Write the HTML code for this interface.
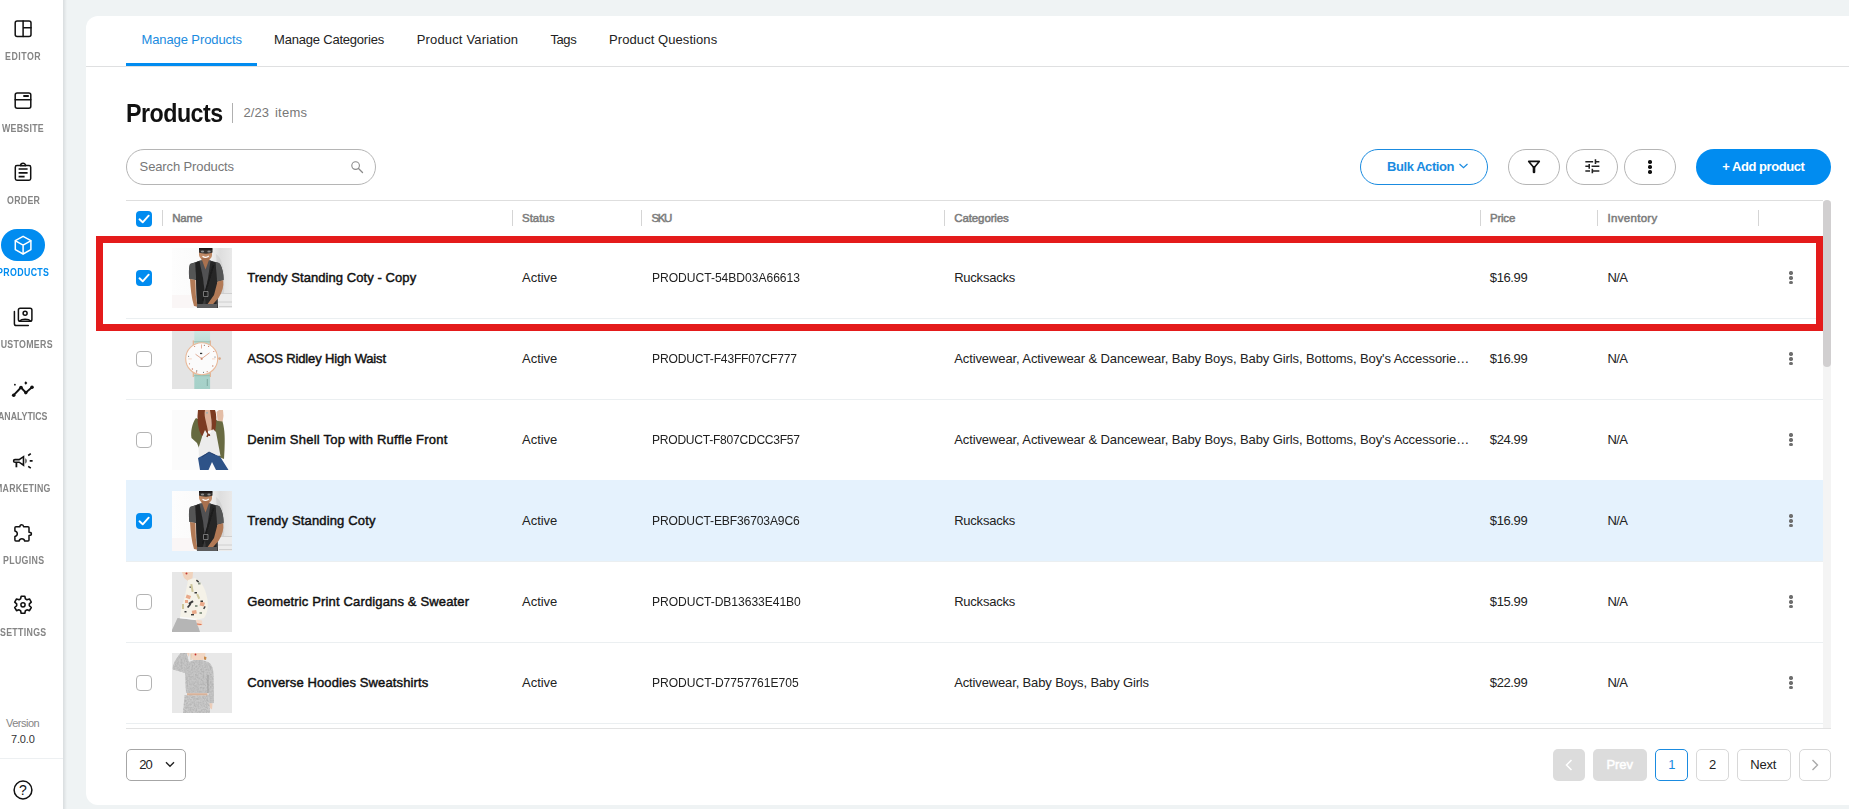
<!DOCTYPE html>
<html lang="en"><head><meta charset="utf-8"><title>Products</title>
<style>
*{box-sizing:border-box;margin:0;padding:0}
html,body{width:1849px;height:809px;overflow:hidden;background:#eff3f4;font-family:"Liberation Sans",sans-serif}
.t{position:absolute;white-space:pre;line-height:20px;height:20px}
.abs{position:absolute}
#side{position:absolute;left:0;top:0;width:63px;height:809px;background:#fff}
#sideshadow{position:absolute;left:63px;top:0;width:4px;height:809px;background:linear-gradient(90deg,#d9dddf,#eff3f4)}
#card{position:absolute;left:86px;top:16px;width:1780px;height:789px;background:#fff;border-radius:12px 0 0 12px}
.hl{position:absolute;height:1px;background:#e6e6e6}
.vsep{position:absolute;width:1px;height:16px;top:210px;background:#d5d5d5}
.cb{position:absolute;width:16px;height:16px;border-radius:4px;left:136px}
/*cboff*/.cb.off{border:1px solid #b3b3b3;background:#fff}
.cb.on{background:#018cf0}
.thumb{position:absolute;left:172px;width:60px;height:60px;overflow:hidden}
.btn{position:absolute;top:149px;height:36px;border-radius:18px}
.pg{position:absolute;top:749px;height:32px;border-radius:5px}
svg{position:absolute;overflow:visible}
#root{position:absolute;left:0;top:0;width:1849px;height:809px;overflow:hidden}

</style></head>
<body>
<div id="root">
<div id="side"></div><div id="sideshadow"></div>
<span class="t" style="left:5.15px;top:46.9px;font-size:10px;font-weight:700;color:#858585;letter-spacing:0.59px;transform:scaleX(0.88);transform-origin:0 50%;">EDITOR</span>
<span class="t" style="left:2.15px;top:118.9px;font-size:10px;font-weight:700;color:#858585;letter-spacing:0.3px;transform:scaleX(0.88);transform-origin:0 50%;">WEBSITE</span>
<span class="t" style="left:6.5px;top:190.9px;font-size:10px;font-weight:700;color:#858585;letter-spacing:0.34px;transform:scaleX(0.88);transform-origin:0 50%;">ORDER</span>
<span class="t" style="left:-3px;top:262.9px;font-size:10px;font-weight:700;color:#018cf0;letter-spacing:0.42px;transform:scaleX(0.88);transform-origin:0 50%;">PRODUCTS</span>
<span class="t" style="left:-6.3px;top:334.9px;font-size:10px;font-weight:700;color:#858585;letter-spacing:0.36px;transform:scaleX(0.88);transform-origin:0 50%;">CUSTOMERS</span>
<span class="t" style="left:-1.7px;top:406.9px;font-size:10px;font-weight:700;color:#858585;letter-spacing:-0.02px;transform:scaleX(0.88);transform-origin:0 50%;">ANALYTICS</span>
<span class="t" style="left:-4.7px;top:478.9px;font-size:10px;font-weight:700;color:#858585;letter-spacing:0.3px;transform:scaleX(0.88);transform-origin:0 50%;">MARKETING</span>
<span class="t" style="left:2.5px;top:550.9px;font-size:10px;font-weight:700;color:#858585;letter-spacing:0.36px;transform:scaleX(0.88);transform-origin:0 50%;">PLUGINS</span>
<span class="t" style="left:-0.1px;top:622.9px;font-size:10px;font-weight:700;color:#858585;letter-spacing:0.35px;transform:scaleX(0.88);transform-origin:0 50%;">SETTINGS</span>
<div class="abs" style="left:1px;top:229px;width:44px;height:32px;border-radius:16px;background:#018cf0"></div>
<svg style="left:0;top:0" width="63" height="809" viewBox="0 0 63 809"><g stroke="#111" stroke-width="1.5" fill="none" stroke-linecap="round" stroke-linejoin="round"><rect x="15.2" y="21.1" width="15.8" height="15.4" rx="2"/><path d="M23.1 21.1V36.5M23.1 27.8H31"/></g>
<g stroke="#111" stroke-width="1.5" fill="none" stroke-linecap="round" stroke-linejoin="round"><rect x="15.2" y="93.1" width="15.6" height="15.1" rx="2"/><path d="M15.2 99.8H30.8"/><path d="M23.300 96H28.800" stroke-width="2" stroke-linecap="butt"/></g>
<g stroke="#111" stroke-width="1.5" fill="none" stroke-linecap="round" stroke-linejoin="round" transform="translate(0 0.6)"><path d="M20.600 165H16.900a1.600 1.600 0 0 0-1.600 1.600V178a1.600 1.600 0 0 0 1.600 1.600H29.100a1.600 1.600 0 0 0 1.600-1.600V166.600a1.600 1.600 0 0 0-1.600-1.600H25.600"/><path d="M20.600 165.200a2.500 2.500 0 0 1 5 0Z"/><path d="M18.600 168.400H27.600M18.600 172.200H27.600M18.600 176.100H24.600" stroke-linecap="butt" stroke-width="1.700"/></g>
<g stroke="#fff" stroke-width="1.5" fill="none" stroke-linecap="round" stroke-linejoin="round"><path d="M23.1 236.3L30.9 240.7V249.6L23.1 254L15.3 249.6V240.7Z"/><path d="M15.5 240.8L23.1 245.1L30.7 240.8M23.1 245.1V253.8"/></g>
<g stroke="#111" stroke-width="1.5" fill="none" stroke-linecap="round" stroke-linejoin="round"><rect x="18.4" y="308.2" width="13.5" height="13" rx="1.8"/><circle cx="25.1" cy="313.3" r="2"/><path d="M20 320.9C21.5 318.6 28.7 318.6 30.3 320.9"/><path d="M14.4 311.5V323.8a1.8 1.8 0 0 0 1.8 1.8H28.3"/></g>
<g stroke="#111" stroke-width="1.5" fill="none" stroke-linecap="round" stroke-linejoin="round"><path d="M13.7 395.2L21 387.5L25.8 392.6L32 387.2" stroke-width="1.900"/></g><g fill="#111"><circle cx="13.700" cy="395.200" r="1.800"/><circle cx="21" cy="387.500" r="1.800"/><circle cx="25.800" cy="392.600" r="1.800"/><circle cx="32" cy="387.200" r="1.800"/><circle cx="14.9" cy="384.7" r="0.9"/><path d="M25.8 381.3L27.3 383L25.8 384.7L24.3 383Z"/></g>
<g stroke="#111" stroke-width="1.5" fill="none" stroke-linecap="round" stroke-linejoin="round"><path d="M14.900 459.600H19.100L23.500 456.700V465.200L19.100 462.200H14.900a1.300 1.300 0 0 1 0-2.600Z" stroke-width="1.600" stroke-linejoin="miter"/><path d="M16.400 462.400V467.300" stroke-width="1.800" stroke-linecap="butt"/><path d="M28.200 455.500L30.800 453.700M29.700 460.900H32.600M28.200 466.400L30.800 468.200" stroke-width="1.600" stroke-linecap="butt"/></g><path d="M25.100 458.200C27.500 459 27.500 462.700 25.100 463.500Z" fill="#666"/>
<g stroke="#111" stroke-width="1.5" fill="none" stroke-linecap="round" stroke-linejoin="round"><path d="M15.900 526.700H19.900C19.900 525.300 20.600 524.800 21.700 524.800C22.800 524.800 23.500 525.300 23.600 526.700H28a1 1 0 0 1 1 1V532.300C30.500 532.300 31.400 532.800 31.400 533.900C31.400 535 30.500 535.400 29 535.400V540a1 1 0 0 1-1 1H24.700C24.400 539.600 23.300 538.800 21.900 538.800C20.500 538.800 19.400 539.600 19.100 541H15.900a1 1 0 0 1-1-1V536.500C16.300 536.200 17.300 535.200 17.300 533.800C17.300 532.400 16.300 531.300 14.900 531V527.700a1 1 0 0 1 1-1Z"/></g>
<g stroke="#111" stroke-width="1.5" fill="none" stroke-linecap="round" stroke-linejoin="round"><path d="M20.60 598.87L21.19 596.29L24.81 596.29L25.40 598.87L26.94 599.75L29.46 598.97L31.28 602.12L29.34 603.92L29.34 605.68L31.28 607.48L29.46 610.63L26.94 609.85L25.40 610.73L24.81 613.31L21.19 613.31L20.60 610.73L19.06 609.85L16.54 610.63L14.72 607.48L16.66 605.68L16.66 603.92L14.72 602.12L16.54 598.97L19.06 599.75Z" stroke-width="1.6"/><circle cx="23" cy="604.8" r="2.1" stroke-width="1.500"/></g>
<g stroke="#111" stroke-width="1.5" fill="none" stroke-linecap="round" stroke-linejoin="round"><circle cx="23" cy="790" r="8.9"/></g></svg>
<span class="t" style="left:19.1px;top:780.2px;font-size:14px;font-weight:400;color:#111;/*HELPQ*/">?</span>
<span class="t" style="left:5.9px;top:713.3px;font-size:11px;font-weight:400;color:#858585;letter-spacing:-0.48px;">Version</span>
<span class="t" style="left:11.05px;top:729px;font-size:11px;font-weight:400;color:#333;letter-spacing:-0.19px;">7.0.0</span>
<div class="hl" style="left:0;top:758px;width:63px;background:#edf0f2"></div>
<div id="card"></div>
<span class="t" style="left:141.4px;top:29.7px;font-size:13px;font-weight:400;color:#1a8be0;letter-spacing:-0.09px;">Manage Products</span>
<span class="t" style="left:274.1px;top:29.7px;font-size:13px;font-weight:400;color:#222;letter-spacing:-0.21px;">Manage Categories</span>
<span class="t" style="left:416.7px;top:29.7px;font-size:13px;font-weight:400;color:#222;letter-spacing:0.16px;">Product Variation</span>
<span class="t" style="left:550.4px;top:29.7px;font-size:13px;font-weight:400;color:#222;letter-spacing:-0.39px;">Tags</span>
<span class="t" style="left:609.1px;top:29.7px;font-size:13px;font-weight:400;color:#222;letter-spacing:0.07px;">Product Questions</span>
<div class="hl" style="left:86px;top:66px;width:1763px;background:#dfe0e1"></div>
<div class="abs" style="left:126px;top:63px;width:131px;height:3px;background:#018cf0"></div>
<span class="t" style="left:125.6px;top:103px;font-size:25px;font-weight:700;color:#111;letter-spacing:-0.55px;transform:scaleX(0.93);transform-origin:0 50%;line-height:30px;height:30px;margin-top:-5px;">Products</span>
<div class="abs" style="left:232px;top:103px;width:1px;height:20px;background:#b0b0b0"></div>
<span class="t" style="left:243.5px;top:102.8px;font-size:13px;font-weight:400;color:#777;letter-spacing:0.06px;">2/23</span>
<span class="t" style="left:275px;top:102.8px;font-size:13px;font-weight:400;color:#777;letter-spacing:0.23px;">items</span>
<div class="abs" style="left:126px;top:149px;width:250px;height:36px;border:1px solid #b5b5b5;border-radius:18px;background:#fff"></div>
<span class="t" style="left:139.6px;top:156.8px;font-size:13px;font-weight:400;color:#777;letter-spacing:-0.12px;">Search Products</span>
<svg style="left:350px;top:160px" width="14" height="14" viewBox="0 0 14 14"><circle cx="5.600" cy="5.600" r="3.800" fill="none" stroke="#8a8a8a" stroke-width="1.100"/><path d="M8.500 8.500L12.500 12.500" stroke="#8a8a8a" stroke-width="1.300" stroke-linecap="round"/></svg>
<div class="btn" style="left:1360px;width:128px;border:1px solid #1a8be0;background:#fff"></div>
<span class="t" style="left:1387px;top:157px;font-size:13px;font-weight:700;color:#1a8be0;letter-spacing:-0.43px;">Bulk Action</span>
<svg style="left:1459px;top:163px" width="9" height="6" viewBox="0 0 9 6"><path d="M0.500 1L4.500 4.700L8.500 1" fill="none" stroke="#1a8be0" stroke-width="1.200"/></svg>
<div class="btn" style="left:1508px;width:52px;border:1px solid #b5b5b5;background:#fff"></div>
<div class="btn" style="left:1566px;width:52px;border:1px solid #b5b5b5;background:#fff"></div>
<div class="btn" style="left:1624px;width:52px;border:1px solid #b5b5b5;background:#fff"></div>
<svg style="left:0;top:0" width="1849" height="200" viewBox="0 0 1849 200"><path d="M1528.700 161.400H1539.300L1534 167.800Z" fill="none" stroke="#111" stroke-width="1.600" stroke-linejoin="round"/><path d="M1534 167.400V172" stroke="#111" stroke-width="2.600" stroke-linecap="round"/></svg>
<svg style="left:1582.650px;top:157.200px" width="18.700" height="18.700" viewBox="0 0 24 24"><path fill="#222" d="M3 17v2h6v-2H3zM3 5v2h10V5H3zm10 16v-2h8v-2h-8v-2h-2v6h2zM7 9v2H3v2h4v2h2V9H7zm14 4v-2H11v2h10zm-6-4h2V7h4V5h-4V3h-2v6z"/></svg>
<div class="abs" style="left:1648.25px;top:160.35px;width:3.5px;height:3.5px;border-radius:50%;background:#111"></div>
<div class="abs" style="left:1648.25px;top:165.4px;width:3.5px;height:3.5px;border-radius:50%;background:#111"></div>
<div class="abs" style="left:1648.25px;top:170.45px;width:3.5px;height:3.5px;border-radius:50%;background:#111"></div>
<div class="btn" style="left:1696px;width:135px;background:#018cf0"></div>
<span class="t" style="left:1722.2px;top:157px;font-size:13px;font-weight:700;color:#fff;letter-spacing:-0.45px;">+ Add product</span>
<div class="hl" style="left:126px;top:200px;width:1697px;background:#dedede"></div>
<div class="abs" style="left:1823px;top:201px;width:8px;height:527px;background:#f4f4f4"></div>
<div class="abs" style="left:1823px;top:200px;width:8px;height:167px;background:#d1cfd0;border-radius:4px 4px 4px 4px"></div>
<div class="vsep" style="left:162px"></div>
<div class="vsep" style="left:512px"></div>
<div class="vsep" style="left:641px"></div>
<div class="vsep" style="left:944px"></div>
<div class="vsep" style="left:1480px"></div>
<div class="vsep" style="left:1597px"></div>
<div class="vsep" style="left:1758px"></div>
<span class="t" style="left:172.3px;top:208px;font-size:11.5px;font-weight:400;color:#7c7c7c;letter-spacing:-0.23px;-webkit-text-stroke:0.5px #7c7c7c;">Name</span>
<span class="t" style="left:522.1px;top:208px;font-size:11.5px;font-weight:400;color:#7c7c7c;letter-spacing:-0.06px;-webkit-text-stroke:0.5px #7c7c7c;">Status</span>
<span class="t" style="left:651.6px;top:208px;font-size:11.5px;font-weight:400;color:#7c7c7c;letter-spacing:-1.43px;-webkit-text-stroke:0.5px #7c7c7c;">SKU</span>
<span class="t" style="left:954.3px;top:208px;font-size:11.5px;font-weight:400;color:#7c7c7c;letter-spacing:-0.12px;-webkit-text-stroke:0.5px #7c7c7c;">Categories</span>
<span class="t" style="left:1490px;top:208px;font-size:11.5px;font-weight:400;color:#7c7c7c;letter-spacing:-0.23px;-webkit-text-stroke:0.5px #7c7c7c;">Price</span>
<span class="t" style="left:1607.6px;top:208px;font-size:11.5px;font-weight:400;color:#7c7c7c;letter-spacing:0.29px;-webkit-text-stroke:0.5px #7c7c7c;">Inventory</span>
<div class="cb on" style="top:211px"><svg style="left:0;top:0" width="16" height="16" viewBox="0 0 16 16"><path d="M3.500 8.300L6.700 11.300L12.700 4.700" fill="none" stroke="#fff" stroke-width="1.900" stroke-linecap="round" stroke-linejoin="round"/></svg></div>
<div class="hl" style="left:126px;top:318px;width:1697px;background:#ebeff1"></div>
<div class="cb on" style="top:270px"><svg style="left:0;top:0" width="16" height="16" viewBox="0 0 16 16"><path d="M3.500 8.300L6.700 11.300L12.700 4.700" fill="none" stroke="#fff" stroke-width="1.900" stroke-linecap="round" stroke-linejoin="round"/></svg></div>
<div class="thumb" style="top:248px"><svg width="60" height="60" viewBox="0 0 60 60" style="left:0;top:0">
<defs>
<linearGradient id="mbg" x1="0" x2="1" y1="0" y2="0"><stop offset="0" stop-color="#fdfdfd"/><stop offset="0.55" stop-color="#fafafa"/><stop offset="0.8" stop-color="#dedede"/><stop offset="1" stop-color="#e9e9e9"/></linearGradient>
<filter id="b6" x="-10%" y="-10%" width="120%" height="120%"><feGaussianBlur stdDeviation="0.55"/></filter>
</defs>
<rect width="60" height="60" fill="url(#mbg)"/>
<rect x="0" y="47" width="22" height="13" fill="#faf6f6"/>
<rect x="45" y="45" width="15" height="15" fill="#ececec"/>
<path d="M45 45.500H60M46 54H60M47 58.500H60" stroke="#c9c9c9" stroke-width="0.8"/>
<g filter="url(#b6)">
<path d="M44 6C50 10 53 20 52 46L47 46Z" fill="#cfcfcf" opacity="0.7"/>
<path d="M27 0H40V7C40 10 37 12.500 33.500 12.500C30 12.500 27 10 27 6Z" fill="#c08a66"/>
<path d="M27 0H40.500V2H27Z" fill="#1d1917"/><path d="M27 1.800H40.500V4.600C38 6 30 6 27 4.600Z" fill="#35312f"/><ellipse cx="30.500" cy="3.400" rx="1.700" ry="1" fill="#8d8d8d"/><ellipse cx="37" cy="3.400" rx="1.700" ry="1" fill="#8d8d8d"/>
<path d="M30.500 8.200C32.500 9.600 35 9.600 36.800 8.000" stroke="#fff" stroke-width="1.1" fill="none"/>
<path d="M29.500 10H37.500L37 20H30Z" fill="#a9714f"/>
<path d="M27 13L18 16C16.500 20 16.800 27 17.500 31L24 32L25 60H46L45.500 34L51.500 32C51.800 26 50 18 47 15L38 12.500L29 12.500Z" fill="#3a3a3a"/>
<path d="M18 16L23 14.500L24.500 31.500L17.500 31C16.800 26 16.800 20 18 16Z" fill="#555657"/>
<path d="M43.500 14L47 15C50 18 51.800 26 51.500 32L45 33.500Z" fill="#555657"/>
<path d="M28 12.500L38.500 12.500L41 14L36 40L33 44L26 30L24.500 14Z" fill="#515153"/>
<path d="M23.500 14.500L27.500 13L31 30L33 47L30 59L25 60Z" fill="#232323"/>
<path d="M38.500 13L43.500 14.500L45.500 40L44 56L34 60L33 47L36 30Z" fill="#262626"/>
<path d="M29.800 11.500L33.500 21.500L37.200 11.500L36.500 10H30.500Z" fill="#a9714f"/>
<path d="M18 31L23.500 32L23.800 45C24 52 25 56 26.500 59L22 58C19.500 50 18.500 40 18 31Z" fill="#b27a56"/>
<path d="M45.500 33.500L51.200 32.200C52 38 50.500 44 46.500 50L38 59.500L33.500 59L42 47Z" fill="#b27a56"/>
<path d="M25 56H45V60H25Z" fill="#5b5b5d"/>
<path d="M41.500 17L30.500 53" stroke="#1b1b1b" stroke-width="1.600"/><path d="M31.500 43.500H36V48.500H31.500Z" fill="none" stroke="#9a9a9a" stroke-width="0.700"/>
</g>
</svg></div>
<span class="t" style="left:247.2px;top:267.5px;font-size:13px;font-weight:400;color:#111;letter-spacing:0.07px;-webkit-text-stroke:0.45px #111;">Trendy Standing Coty - Copy</span>
<span class="t" style="left:522.1px;top:267.5px;font-size:13px;font-weight:400;color:#222;letter-spacing:-0.04px;">Active</span>
<span class="t" style="left:651.8px;top:267.5px;font-size:13px;font-weight:400;color:#222;letter-spacing:-0.03px;transform:scaleX(0.93);transform-origin:0 50%;">PRODUCT-54BD03A66613</span>
<span class="t" style="left:954.2px;top:267.5px;font-size:13px;font-weight:400;color:#222;letter-spacing:-0.23px;">Rucksacks</span>
<span class="t" style="left:1489.8px;top:267.5px;font-size:13px;font-weight:400;color:#222;letter-spacing:-0.39px;">$16.99</span>
<span class="t" style="left:1607.5px;top:267.5px;font-size:13px;font-weight:400;color:#222;letter-spacing:-0.64px;">N/A</span>
<div class="abs" style="left:1789.35px;top:271.26px;width:3.3px;height:3.3px;border-radius:50%;background:#6e6e6e"></div>
<div class="abs" style="left:1789.35px;top:276.21px;width:3.3px;height:3.3px;border-radius:50%;background:#6e6e6e"></div>
<div class="abs" style="left:1789.35px;top:281.16px;width:3.3px;height:3.3px;border-radius:50%;background:#6e6e6e"></div>
<div class="hl" style="left:126px;top:399px;width:1697px;background:#ebeff1"></div>
<div class="cb off" style="top:351px"></div>
<div class="thumb" style="top:329px"><svg width="60" height="60" viewBox="0 0 60 60" style="left:0;top:0">
<defs><filter id="b5" x="-10%" y="-10%" width="120%" height="120%"><feGaussianBlur stdDeviation="0.4"/></filter>
<linearGradient id="strap" x1="0" x2="0" y1="0" y2="1"><stop offset="0" stop-color="#cfe8e3"/><stop offset="0.250" stop-color="#b9dcd5"/><stop offset="0.750" stop-color="#a9d3cb"/><stop offset="1" stop-color="#a5d0c8"/></linearGradient></defs>
<rect width="60" height="60" fill="#e4e4e4"/>
<g filter="url(#b5)">
<rect x="22.300" y="0" width="15.800" height="60" fill="url(#strap)"/>
<path d="M21.300 11.500V17M38.300 11.500V17M21.300 42.500V48M38.300 42.500V48" stroke="#e3b291" stroke-width="1.200"/>
<path d="M22 12.800H38M22 46.700H38" stroke="#8fb5a6" stroke-width="0.800"/>
<circle cx="29.700" cy="29.700" r="16" fill="#fbfbfb" stroke="#e9b999" stroke-width="1.100"/>
<circle cx="47.600" cy="29.600" r="1.300" fill="#d9a988"/>
<path d="M29.700 29.700L23.500 25.200M29.700 29.700L37.500 23.800" stroke="#d9967a" stroke-width="0.800"/>
<path d="M29.500 15.500V19.500" stroke="#e8a68c" stroke-width="0.900"/>
<path d="M16.300 29.900H19.800M40 29.900H43.300" stroke="#f0c4ae" stroke-width="0.700"/>
<rect x="28.800" y="28.600" width="1.700" height="2.200" fill="#c98a6e"/>
<rect x="28" y="23.800" width="2.200" height="1.300" fill="#333"/>
<g fill="#c9826a"><circle cx="22.600" cy="17.500" r="0.600"/><circle cx="36.600" cy="17.400" r="0.600"/><circle cx="17.500" cy="34.800" r="0.600"/><circle cx="20.400" cy="40" r="0.700"/><circle cx="24.500" cy="43" r="0.700"/><circle cx="35.200" cy="42.700" r="0.600"/><circle cx="40.800" cy="37" r="0.700"/><circle cx="41.800" cy="22.500" r="0.600"/></g>
<g fill="#444"><circle cx="16.600" cy="27.200" r="0.500"/><circle cx="32.300" cy="16.200" r="0.500"/><circle cx="43" cy="28" r="0.500"/><circle cx="24.800" cy="41.800" r="0.500"/><circle cx="31.500" cy="43.200" r="0.500"/></g>
<path d="M35.300 50V57" stroke="#6f9a90" stroke-width="0.700"/>
</g>
</svg></div>
<span class="t" style="left:247.2px;top:348.5px;font-size:13px;font-weight:400;color:#111;letter-spacing:-0.14px;-webkit-text-stroke:0.45px #111;">ASOS Ridley High Waist</span>
<span class="t" style="left:522.1px;top:348.5px;font-size:13px;font-weight:400;color:#222;letter-spacing:-0.04px;">Active</span>
<span class="t" style="left:651.8px;top:348.5px;font-size:13px;font-weight:400;color:#222;letter-spacing:-0.2px;transform:scaleX(0.93);transform-origin:0 50%;">PRODUCT-F43FF07CF777</span>
<span class="t" style="left:954.2px;top:348.5px;font-size:13px;font-weight:400;color:#222;letter-spacing:-0.1px;">Activewear, Activewear &amp; Dancewear, Baby Boys, Baby Girls, Bottoms, Boy&#x27;s Accessorie…</span>
<span class="t" style="left:1489.8px;top:348.5px;font-size:13px;font-weight:400;color:#222;letter-spacing:-0.39px;">$16.99</span>
<span class="t" style="left:1607.5px;top:348.5px;font-size:13px;font-weight:400;color:#222;letter-spacing:-0.64px;">N/A</span>
<div class="abs" style="left:1789.35px;top:352.26px;width:3.3px;height:3.3px;border-radius:50%;background:#6e6e6e"></div>
<div class="abs" style="left:1789.35px;top:357.21px;width:3.3px;height:3.3px;border-radius:50%;background:#6e6e6e"></div>
<div class="abs" style="left:1789.35px;top:362.16px;width:3.3px;height:3.3px;border-radius:50%;background:#6e6e6e"></div>
<div class="hl" style="left:126px;top:480px;width:1697px;background:#ebeff1"></div>
<div class="cb off" style="top:432px"></div>
<div class="thumb" style="top:410px"><svg width="60" height="60" viewBox="0 0 60 60" style="left:0;top:0">
<defs><filter id="b4" x="-10%" y="-10%" width="120%" height="120%"><feGaussianBlur stdDeviation="0.550"/></filter></defs>
<rect width="60" height="60" fill="#fbfbfb"/>
<g filter="url(#b4)">
<path d="M44.500 2L47 0H51L51.500 6L50.500 12L46 13Z" fill="#e3bda6"/>
<path d="M31 0H39V5L40 20L33 22Z" fill="#ddb29b"/>
<path d="M24 8C20 13 18.500 22 19.500 28L25 33L27 38L30 33L31 12Z" fill="#666a40"/>
<path d="M41 8L46 11L50.500 11.500C53 20 53 30 52.500 40L52 49L47 47L43 30Z" fill="#686b42"/>
<path d="M26 0H33C32 4 33 8 34 12C35 17 37 22 35.500 27L31 26.500C27 24 25.500 14 25.500 6Z" fill="#7b3b22"/>
<path d="M38 0H43C45 5 44.500 14 43 22L39.500 20C40 13 39 6 38 0Z" fill="#7b3b22"/>
<path d="M33 20L36.500 26L41 19L44 22L48.500 46L37 42.500L27 48L26.500 38L30 27Z" fill="#ececec"/>
<path d="M35 27C36 24 37 23 37.500 26" stroke="#7b3b22" stroke-width="1.500" fill="none"/>
<path d="M37 42L48 46.500L56.500 60H44L40 52L36.500 60H28L26 48Z" fill="#2f5288"/>
<path d="M30 47L37 42L43 45" stroke="#1f3a66" stroke-width="0.800" fill="none"/>
<circle cx="35" cy="2.800" r="0.900" fill="#8fb0b5"/>
</g>
</svg></div>
<span class="t" style="left:247.2px;top:429.5px;font-size:13px;font-weight:400;color:#111;letter-spacing:0.24px;-webkit-text-stroke:0.45px #111;">Denim Shell Top with Ruffle Front</span>
<span class="t" style="left:522.1px;top:429.5px;font-size:13px;font-weight:400;color:#222;letter-spacing:-0.04px;">Active</span>
<span class="t" style="left:651.8px;top:429.5px;font-size:13px;font-weight:400;color:#222;letter-spacing:-0.29px;transform:scaleX(0.93);transform-origin:0 50%;">PRODUCT-F807CDCC3F57</span>
<span class="t" style="left:954.2px;top:429.5px;font-size:13px;font-weight:400;color:#222;letter-spacing:-0.1px;">Activewear, Activewear &amp; Dancewear, Baby Boys, Baby Girls, Bottoms, Boy&#x27;s Accessorie…</span>
<span class="t" style="left:1489.8px;top:429.5px;font-size:13px;font-weight:400;color:#222;letter-spacing:-0.39px;">$24.99</span>
<span class="t" style="left:1607.5px;top:429.5px;font-size:13px;font-weight:400;color:#222;letter-spacing:-0.64px;">N/A</span>
<div class="abs" style="left:1789.35px;top:433.26px;width:3.3px;height:3.3px;border-radius:50%;background:#6e6e6e"></div>
<div class="abs" style="left:1789.35px;top:438.21px;width:3.3px;height:3.3px;border-radius:50%;background:#6e6e6e"></div>
<div class="abs" style="left:1789.35px;top:443.16px;width:3.3px;height:3.3px;border-radius:50%;background:#6e6e6e"></div>
<div class="abs" style="left:126px;top:480px;width:1697px;height:81px;background:#e5f2fd"></div>
<div class="hl" style="left:126px;top:561px;width:1697px;background:#ebeff1"></div>
<div class="cb on" style="top:513px"><svg style="left:0;top:0" width="16" height="16" viewBox="0 0 16 16"><path d="M3.500 8.300L6.700 11.300L12.700 4.700" fill="none" stroke="#fff" stroke-width="1.900" stroke-linecap="round" stroke-linejoin="round"/></svg></div>
<div class="thumb" style="top:491px"><svg width="60" height="60" viewBox="0 0 60 60" style="left:0;top:0">
<defs>
<linearGradient id="mbg2" x1="0" x2="1" y1="0" y2="0"><stop offset="0" stop-color="#fdfdfd"/><stop offset="0.55" stop-color="#fafafa"/><stop offset="0.8" stop-color="#dedede"/><stop offset="1" stop-color="#e9e9e9"/></linearGradient>
<filter id="b62" x="-10%" y="-10%" width="120%" height="120%"><feGaussianBlur stdDeviation="0.55"/></filter>
</defs>
<rect width="60" height="60" fill="url(#mbg2)"/>
<rect x="0" y="47" width="22" height="13" fill="#faf6f6"/>
<rect x="45" y="45" width="15" height="15" fill="#ececec"/>
<path d="M45 45.500H60M46 54H60M47 58.500H60" stroke="#c9c9c9" stroke-width="0.8"/>
<g filter="url(#b62)">
<path d="M44 6C50 10 53 20 52 46L47 46Z" fill="#cfcfcf" opacity="0.7"/>
<path d="M27 0H40V7C40 10 37 12.500 33.500 12.500C30 12.500 27 10 27 6Z" fill="#c08a66"/>
<path d="M27 0H40.500V2H27Z" fill="#1d1917"/><path d="M27 1.800H40.500V4.600C38 6 30 6 27 4.600Z" fill="#35312f"/><ellipse cx="30.500" cy="3.400" rx="1.700" ry="1" fill="#8d8d8d"/><ellipse cx="37" cy="3.400" rx="1.700" ry="1" fill="#8d8d8d"/>
<path d="M30.500 8.200C32.500 9.600 35 9.600 36.800 8.000" stroke="#fff" stroke-width="1.1" fill="none"/>
<path d="M29.500 10H37.500L37 20H30Z" fill="#a9714f"/>
<path d="M27 13L18 16C16.500 20 16.800 27 17.500 31L24 32L25 60H46L45.500 34L51.500 32C51.800 26 50 18 47 15L38 12.500L29 12.500Z" fill="#3a3a3a"/>
<path d="M18 16L23 14.500L24.500 31.500L17.500 31C16.800 26 16.800 20 18 16Z" fill="#555657"/>
<path d="M43.500 14L47 15C50 18 51.800 26 51.500 32L45 33.500Z" fill="#555657"/>
<path d="M28 12.500L38.500 12.500L41 14L36 40L33 44L26 30L24.500 14Z" fill="#515153"/>
<path d="M23.500 14.500L27.500 13L31 30L33 47L30 59L25 60Z" fill="#232323"/>
<path d="M38.500 13L43.500 14.500L45.500 40L44 56L34 60L33 47L36 30Z" fill="#262626"/>
<path d="M29.800 11.500L33.500 21.500L37.200 11.500L36.500 10H30.500Z" fill="#a9714f"/>
<path d="M18 31L23.500 32L23.800 45C24 52 25 56 26.500 59L22 58C19.500 50 18.500 40 18 31Z" fill="#b27a56"/>
<path d="M45.500 33.500L51.200 32.200C52 38 50.500 44 46.500 50L38 59.500L33.500 59L42 47Z" fill="#b27a56"/>
<path d="M25 56H45V60H25Z" fill="#5b5b5d"/>
<path d="M41.500 17L30.500 53" stroke="#1b1b1b" stroke-width="1.600"/><path d="M31.500 43.500H36V48.500H31.500Z" fill="none" stroke="#9a9a9a" stroke-width="0.700"/>
</g>
</svg></div>
<span class="t" style="left:247.2px;top:510.5px;font-size:13px;font-weight:400;color:#111;letter-spacing:0.16px;-webkit-text-stroke:0.45px #111;">Trendy Standing Coty</span>
<span class="t" style="left:522.1px;top:510.5px;font-size:13px;font-weight:400;color:#222;letter-spacing:-0.04px;">Active</span>
<span class="t" style="left:651.8px;top:510.5px;font-size:13px;font-weight:400;color:#222;letter-spacing:-0.16px;transform:scaleX(0.93);transform-origin:0 50%;">PRODUCT-EBF36703A9C6</span>
<span class="t" style="left:954.2px;top:510.5px;font-size:13px;font-weight:400;color:#222;letter-spacing:-0.23px;">Rucksacks</span>
<span class="t" style="left:1489.8px;top:510.5px;font-size:13px;font-weight:400;color:#222;letter-spacing:-0.39px;">$16.99</span>
<span class="t" style="left:1607.5px;top:510.5px;font-size:13px;font-weight:400;color:#222;letter-spacing:-0.64px;">N/A</span>
<div class="abs" style="left:1789.35px;top:514.26px;width:3.3px;height:3.3px;border-radius:50%;background:#6e6e6e"></div>
<div class="abs" style="left:1789.35px;top:519.21px;width:3.3px;height:3.3px;border-radius:50%;background:#6e6e6e"></div>
<div class="abs" style="left:1789.35px;top:524.16px;width:3.3px;height:3.3px;border-radius:50%;background:#6e6e6e"></div>
<div class="hl" style="left:126px;top:642px;width:1697px;background:#ebeff1"></div>
<div class="cb off" style="top:594px"></div>
<div class="thumb" style="top:572px"><svg width="60" height="60" viewBox="0 0 60 60" style="left:0;top:0">
<defs><filter id="b3" x="-10%" y="-10%" width="120%" height="120%"><feGaussianBlur stdDeviation="0.550"/></filter></defs>
<rect width="60" height="60" fill="#e7e7e7"/>
<g filter="url(#b3)">
<path d="M10 0H21L20.500 6L16 9L12 6Z" fill="#f0d3bd"/>
<circle cx="14.500" cy="1.600" r="1" fill="#c43a32"/>
<path d="M16 8L23 6C30 9 34 18 35.500 28C36.500 36 35 42 32 46L24 48L8 46L9 36L13 24Z" fill="#f5f2e8"/>
<path d="M5.500 46L24 48L28 60H0V58Z" fill="#b5b5b5"/>
<path d="M8 45.500L25 47.500" stroke="#fafafa" stroke-width="1.600"/>
<path d="M23.500 47.500L30 48.500L30.500 53L26 54.500Z" fill="#f3d9c8"/>
<path d="M25 52L29.500 52.500" stroke="#d9603a" stroke-width="0.900"/>
<g fill="#e9a98a"><rect x="14" y="23" width="4.500" height="3.500" transform="rotate(20 16 25)"/><rect x="28" y="30" width="4.500" height="4" transform="rotate(15 30 32)"/><rect x="20" y="38.500" width="4.500" height="3.500" transform="rotate(-10 22 40)"/><rect x="13" y="28" width="3" height="3"/></g>
<g fill="#3a3a3a"><rect x="16.500" y="29.500" width="5" height="2" transform="rotate(-35 19 30.500)"/><rect x="15" y="33" width="4.500" height="1.800" transform="rotate(-50 17 34)"/><rect x="28.500" y="28.500" width="2.500" height="1.500"/><rect x="24" y="8" width="3" height="1.500" transform="rotate(40 25 9)"/><rect x="22.500" y="20" width="2.500" height="1.500"/><rect x="31" y="35.500" width="3" height="1.400" transform="rotate(-60 32 36)"/><rect x="19" y="42" width="3" height="1.400"/><rect x="12.500" y="39" width="2" height="1.500"/><rect x="17.500" y="14.500" width="2" height="1.200"/></g>
<g fill="#cfc79a"><rect x="19" y="12" width="2" height="8" transform="rotate(-10 20 16)"/><rect x="25" y="22" width="2" height="5" transform="rotate(-25 26 24)"/><rect x="10" y="32" width="2" height="5"/></g>
<g fill="#8e9a8a"><rect x="26" y="10.500" width="2.500" height="2" /><rect x="23" y="33" width="2.500" height="2"/><rect x="27.500" y="40" width="2.500" height="2"/></g>
</g>
</svg></div>
<span class="t" style="left:247.2px;top:591.5px;font-size:13px;font-weight:400;color:#111;letter-spacing:0.15px;-webkit-text-stroke:0.45px #111;">Geometric Print Cardigans &amp; Sweater</span>
<span class="t" style="left:522.1px;top:591.5px;font-size:13px;font-weight:400;color:#222;letter-spacing:-0.04px;">Active</span>
<span class="t" style="left:651.8px;top:591.5px;font-size:13px;font-weight:400;color:#222;letter-spacing:-0.06px;transform:scaleX(0.93);transform-origin:0 50%;">PRODUCT-DB13633E41B0</span>
<span class="t" style="left:954.2px;top:591.5px;font-size:13px;font-weight:400;color:#222;letter-spacing:-0.23px;">Rucksacks</span>
<span class="t" style="left:1489.8px;top:591.5px;font-size:13px;font-weight:400;color:#222;letter-spacing:-0.39px;">$15.99</span>
<span class="t" style="left:1607.5px;top:591.5px;font-size:13px;font-weight:400;color:#222;letter-spacing:-0.64px;">N/A</span>
<div class="abs" style="left:1789.35px;top:595.26px;width:3.3px;height:3.3px;border-radius:50%;background:#6e6e6e"></div>
<div class="abs" style="left:1789.35px;top:600.21px;width:3.3px;height:3.3px;border-radius:50%;background:#6e6e6e"></div>
<div class="abs" style="left:1789.35px;top:605.16px;width:3.3px;height:3.3px;border-radius:50%;background:#6e6e6e"></div>
<div class="hl" style="left:126px;top:723px;width:1697px;background:#ebeff1"></div>
<div class="cb off" style="top:675px"></div>
<div class="thumb" style="top:653px"><svg width="60" height="60" viewBox="0 0 60 60" style="left:0;top:0">
<defs><filter id="b2" x="-10%" y="-10%" width="120%" height="120%"><feGaussianBlur stdDeviation="0.550"/></filter>
<filter id="sp" x="0" y="0" width="100%" height="100%"><feTurbulence type="fractalNoise" baseFrequency="0.550" numOctaves="2" seed="7" result="n"/><feColorMatrix in="n" type="matrix" values="0 0 0 0 0.450  0 0 0 0 0.450  0 0 0 0 0.450  1.600 1.600 0 0 -1.250"/><feComposite in2="SourceGraphic" operator="in"/></filter></defs>
<rect width="60" height="60" fill="#e8e8e8"/>
<g filter="url(#b2)">
<path d="M18.500 0H33.500L33 5L30 8H22L19.500 5Z" fill="#f1d6c3"/>
<circle cx="23.500" cy="1.500" r="0.900" fill="#c9332e"/>
<path d="M32 3.500L34.500 4L34 7L32 6.500Z" fill="#c98a4a"/>
<path d="M19 1V7" stroke="#d9b98a" stroke-width="0.600"/>
<path d="M13 0H17.500L17 4L15 0.500Z" fill="#efd2bf"/>
<g id="cg"><path d="M8.500 0H14.500L17 9L22 7H30L36 9C40 11 41.500 16 41.500 22L42 50L37.500 50.500L36.500 40H14L13 20L1 16.500C0 14 2 8 8.500 0Z" fill="#c6c6c6"/>
<path d="M12.500 42.200H37.500L38 60H11Z" fill="#cacaca"/></g>
<g filter="url(#sp)"><path d="M8.500 0H14.500L17 9L22 7H30L36 9C40 11 41.500 16 41.500 22L42 50L37.500 50.500L36.500 40H14L13 20L1 16.500C0 14 2 8 8.500 0Z" fill="#fff"/><path d="M12.500 42.200H37.500L38 60H11Z" fill="#fff"/></g>
<path d="M15 40.200H35.500V42.300H15Z" fill="#d8b299"/>
<path d="M36 22V40" stroke="#8e8e8e" stroke-width="0.700"/>
<path d="M37.500 50L40.500 50.500L40 56.500L38 55Z" fill="#eccdb9"/>
</g>
</svg></div>
<span class="t" style="left:247.2px;top:672.5px;font-size:13px;font-weight:400;color:#111;letter-spacing:0.12px;-webkit-text-stroke:0.45px #111;">Converse Hoodies Sweatshirts</span>
<span class="t" style="left:522.1px;top:672.5px;font-size:13px;font-weight:400;color:#222;letter-spacing:-0.04px;">Active</span>
<span class="t" style="left:651.8px;top:672.5px;font-size:13px;font-weight:400;color:#222;letter-spacing:-0.03px;transform:scaleX(0.93);transform-origin:0 50%;">PRODUCT-D7757761E705</span>
<span class="t" style="left:954.2px;top:672.5px;font-size:13px;font-weight:400;color:#222;letter-spacing:-0.14px;">Activewear, Baby Boys, Baby Girls</span>
<span class="t" style="left:1489.8px;top:672.5px;font-size:13px;font-weight:400;color:#222;letter-spacing:-0.39px;">$22.99</span>
<span class="t" style="left:1607.5px;top:672.5px;font-size:13px;font-weight:400;color:#222;letter-spacing:-0.64px;">N/A</span>
<div class="abs" style="left:1789.35px;top:676.26px;width:3.3px;height:3.3px;border-radius:50%;background:#6e6e6e"></div>
<div class="abs" style="left:1789.35px;top:681.21px;width:3.3px;height:3.3px;border-radius:50%;background:#6e6e6e"></div>
<div class="abs" style="left:1789.35px;top:686.16px;width:3.3px;height:3.3px;border-radius:50%;background:#6e6e6e"></div>
<div class="hl" style="left:126px;top:728px;width:1705px;background:#e2e2e2"></div>
<div class="abs" style="left:96px;top:236px;width:1727px;height:95px;border:7.5px solid #e41b1b"></div>
<div class="pg" style="left:126px;width:60px;border:1px solid #a6a6a6;background:#fff;border-radius:5px"></div>
<span class="t" style="left:139.2px;top:754.5px;font-size:13px;font-weight:400;color:#222;letter-spacing:-0.87px;">20</span>
<svg style="left:165px;top:761px" width="10" height="7" viewBox="0 0 10 7"><path d="M1 1.3L5 5.3L9 1.3" fill="none" stroke="#222" stroke-width="1.4"/></svg>
<div class="pg" style="left:1553px;width:32px;background:#dcdcdc"></div>
<svg style="left:1565px;top:759px" width="8" height="12" viewBox="0 0 8 12"><path d="M6.5 1L1.5 6L6.5 11" fill="none" stroke="#fff" stroke-width="1.5"/></svg>
<div class="pg" style="left:1593px;width:54px;background:#dcdcdc"></div>
<span class="t" style="left:1606.5px;top:754.5px;font-size:13px;font-weight:400;color:#fff;letter-spacing:-0.08px;-webkit-text-stroke:0.5px #fff;">Prev</span>
<div class="pg" style="left:1655px;width:33px;border:1px solid #1a8be0;background:#fff"></div>
<span class="t" style="left:1668.2px;top:754.5px;font-size:13px;font-weight:400;color:#1a8be0;">1</span>
<div class="pg" style="left:1696px;width:33px;border:1px solid #d8d8d8;background:#fff"></div>
<span class="t" style="left:1709px;top:754.5px;font-size:13px;font-weight:400;color:#222;">2</span>
<div class="pg" style="left:1737px;width:54px;border:1px solid #d8d8d8;background:#fff"></div>
<span class="t" style="left:1750.3px;top:754.5px;font-size:13px;font-weight:400;color:#222;letter-spacing:-0.24px;">Next</span>
<div class="pg" style="left:1799px;width:32px;border:1px solid #d8d8d8;background:#fff"></div>
<svg style="left:1811px;top:758.500px" width="8" height="12" viewBox="0 0 8 12"><path d="M1.5 1L6.5 6L1.5 11" fill="none" stroke="#aaa" stroke-width="1.4"/></svg>
</div>
</body></html>
